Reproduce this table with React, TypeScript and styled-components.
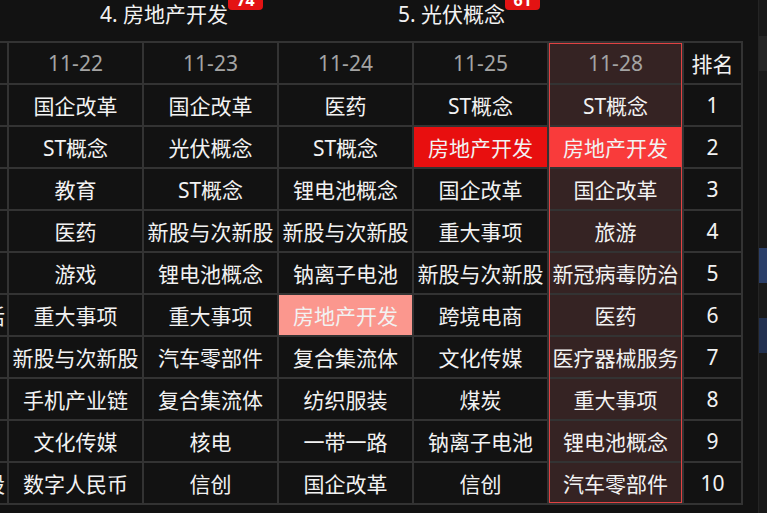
import { Fragment } from "react";
import styled, { createGlobalStyle } from "styled-components";

const GlobalStyle = createGlobalStyle`
  html, body {
    margin: 0;
    padding: 0;
    background: #121212;
  }
  body {
    font-family: "Noto Sans", "Noto Sans CJK SC", sans-serif;
  }
`;

type Tone = "hot" | "warm" | "soft";
type Edge = "top" | "mid" | "bottom";

const toneBg: Record<Tone, string> = {
  hot: "#e80f0f",
  warm: "#f93b3b",
  soft: "#fb978e",
};

const Page = styled.div`
  display: flex;
  width: 767px;
  height: 513px;
  overflow: hidden;
  background: #121212;
`;

const Main = styled.div`
  flex: 1;
  min-width: 0;
  overflow: hidden;
  display: flex;
  flex-direction: column;
`;

const Rail = styled.div`
  width: 8px;
  background: #1a1a1a;
  border-left: 1px solid #242424;
  display: flex;
  flex-direction: column;
`;

const RailBlock = styled.div<{ $top: number; $color: string }>`
  margin-top: ${(p) => p.$top}px;
  height: 35px;
  background: ${(p) => p.$color};
`;

const TopBar = styled.div`
  height: 41px;
  display: grid;
  grid-template-columns: 298px 298px;
  padding-left: 100px;
  align-items: start;
`;

const Title = styled.div`
  position: relative;
  justify-self: start;
  margin-top: 2px;
  font-size: 21px;
  line-height: 24px;
  color: #f2f2f2;
  white-space: nowrap;
`;

const Badge = styled.span`
  position: absolute;
  left: 100%;
  top: -12px;
  width: 35px;
  height: 20px;
  border-radius: 4px;
  background: #e31313;
  color: #fff;
  font-size: 16px;
  font-weight: 700;
  line-height: 20px;
  text-align: center;
`;

const Grid = styled.div`
  display: grid;
  grid-template-columns: 7px repeat(5, 133px) 57px;
  grid-auto-rows: 40px;
  gap: 2px;
  padding: 2px;
  margin-left: -2px;
  width: max-content;
  background: #333333;
`;

const Cell = styled.div<{ $tone?: Tone; $focus?: boolean; $edge?: Edge; $head?: boolean }>`
  position: relative;
  display: flex;
  align-items: center;
  justify-content: center;
  white-space: nowrap;
  font-size: 21px;
  color: ${(p) => (p.$head ? "#a4a4a4" : "#f2f2f2")};
  background: ${(p) => (p.$tone ? toneBg[p.$tone] : p.$focus ? "#352323" : "#121212")};

  ${(p) =>
    p.$edge &&
    `
    &::after {
      content: "";
      position: absolute;
      left: 0;
      right: 0;
      top: ${p.$edge === "top" ? "0" : "-1px"};
      bottom: ${p.$edge === "bottom" ? "0" : "-1px"};
      border-left: 1px solid #e04242;
      border-right: 1px solid #e04242;
      ${p.$edge === "top" ? "border-top: 1px solid #e04242;" : ""}
      ${p.$edge === "bottom" ? "border-bottom: 1px solid #e04242;" : ""}
      pointer-events: none;
    }
  `}
`;

const Stub = styled(Cell)`
  justify-content: flex-end;
  overflow: hidden;
  padding-right: 2px;
`;

const RankHead = styled(Cell)`
  color: #f2f2f2;
`;

type Entry = string | [string, Tone];

const dates = ["11-22", "11-23", "11-24", "11-25", "11-28"];

const rows: { stub: string; items: Entry[] }[] = [
  { stub: "", items: ["国企改革", "国企改革", "医药", "ST概念", "ST概念"] },
  { stub: "", items: ["ST概念", "光伏概念", "ST概念", ["房地产开发", "hot"], ["房地产开发", "warm"]] },
  { stub: "", items: ["教育", "ST概念", "锂电池概念", "国企改革", "国企改革"] },
  { stub: "", items: ["医药", "新股与次新股", "新股与次新股", "重大事项", "旅游"] },
  { stub: "", items: ["游戏", "锂电池概念", "钠离子电池", "新股与次新股", "新冠病毒防治"] },
  { stub: "智慧生活", items: ["重大事项", "重大事项", ["房地产开发", "soft"], "跨境电商", "医药"] },
  { stub: "", items: ["新股与次新股", "汽车零部件", "复合集流体", "文化传媒", "医疗器械服务"] },
  { stub: "", items: ["手机产业链", "复合集流体", "纺织服装", "煤炭", "重大事项"] },
  { stub: "", items: ["文化传媒", "核电", "一带一路", "钠离子电池", "锂电池概念"] },
  { stub: "新股与次新股", items: ["数字人民币", "信创", "国企改革", "信创", "汽车零部件"] },
];

const focusCol = 4;

export default function App() {
  return (
    <>
      <GlobalStyle />
      <Page>
        <Main>
          <TopBar>
            <Title>
              4. 房地产开发
              <Badge>74</Badge>
            </Title>
            <Title>
              5. 光伏概念
              <Badge>61</Badge>
            </Title>
          </TopBar>
          <Grid>
            <Stub />
            {dates.map((d, i) => (
              <Cell key={d} $head $focus={i === focusCol} $edge={i === focusCol ? "top" : undefined}>
                {d}
              </Cell>
            ))}
            <RankHead>排名</RankHead>
            {rows.map((row, r) => (
              <Fragment key={r}>
                <Stub>{row.stub}</Stub>
                {row.items.map((it, i) => {
                  const text = typeof it === "string" ? it : it[0];
                  const tone = typeof it === "string" ? undefined : it[1];
                  const focus = i === focusCol;
                  return (
                    <Cell
                      key={i}
                      $tone={tone}
                      $focus={focus}
                      $edge={focus ? (r === rows.length - 1 ? "bottom" : "mid") : undefined}
                    >
                      {text}
                    </Cell>
                  );
                })}
                <Cell>{r + 1}</Cell>
              </Fragment>
            ))}
          </Grid>
        </Main>
        <Rail>
          <RailBlock $top={36} $color="#262626" />
          <RailBlock $top={177} $color="#2b3f69" />
          <RailBlock $top={35} $color="#223150" />
        </Rail>
      </Page>
    </>
  );
}
